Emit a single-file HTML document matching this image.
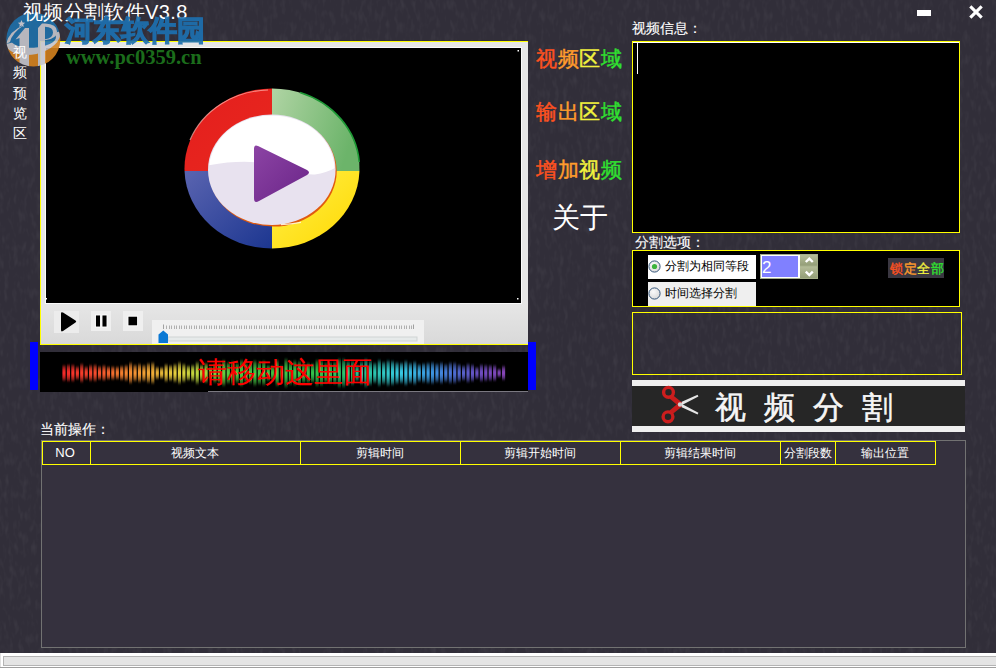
<!DOCTYPE html>
<html><head><meta charset="utf-8">
<style>
*{margin:0;padding:0;box-sizing:border-box}
html,body{width:996px;height:668px;overflow:hidden}
body{background:#312e39;font-family:"Liberation Sans",sans-serif;color:#fff;position:relative}
.a{position:absolute}
.sk{-webkit-text-stroke:0.12px currentColor}
.t{white-space:nowrap;line-height:1}
.yb{border:1px solid #ffff00}
.gr2{-webkit-text-stroke:0.45px currentColor}
.grad{font-weight:500;background:linear-gradient(90deg,#ff4e1c 0%,#ff5c1e 20%,#ff9428 30%,#ffa030 46%,#f5f03c 54%,#f5f53c 72%,#30e028 79%,#28e028 100%);-webkit-background-clip:text;background-clip:text;color:transparent}
.hd{position:absolute;top:0;height:22px;border-right:1px solid #ffff00;font-size:12px;line-height:22px;text-align:center;color:#fff;padding-right:2px}
</style></head><body>

<svg class="a" style="left:0;top:0" width="996" height="668"><filter id="tx" x="0" y="0" width="100%" height="100%"><feTurbulence type="fractalNoise" baseFrequency="0.22 0.09" numOctaves="2" seed="3"/><feColorMatrix type="matrix" values="0 0 0 0 1  0 0 0 0 1  0 0 0 0 1  1.2 0 0 0 -0.55"/></filter><rect width="996" height="668" filter="url(#tx)" opacity="0.09"/></svg>
<!-- title -->
<div class="a" style="left:917px;top:10px;width:14px;height:6px;background:#fff"></div>
<svg class="a" style="left:966px;top:3px" width="20" height="19" viewBox="0 0 20 19"><path d="M4.3 3.3 L15.7 14.7 M15.7 3.3 L4.3 14.7" stroke="#fff" stroke-width="3.1" stroke-linecap="butt"/></svg>


<!-- video panel -->
<div class="a" style="left:40px;top:41px;width:488px;height:304px;background:#e6e6e6;border-left:1px solid #ffff00;border-top:1px solid #ffff00;border-bottom:1px solid #ffff00"></div>
<div class="a" style="left:45px;top:47px;width:477px;height:257px;background:#000;border:1px solid #fafafa"></div>
<div class="a" id="ctrl" style="left:41px;top:304px;width:487px;height:40px;background:linear-gradient(#e6e6e6,#d9d9d9)"></div>
<svg class="a" style="left:0;top:0" width="560" height="350" viewBox="0 0 560 350">
<defs>
<linearGradient id="gg" x1="0" y1="0" x2="1" y2="0.3"><stop offset="0" stop-color="#b0d4a4"/><stop offset="1" stop-color="#6cb46a"/></linearGradient>
<linearGradient id="gy" x1="0" y1="0" x2="1" y2="1"><stop offset="0" stop-color="#fff04a"/><stop offset="1" stop-color="#ffd800"/></linearGradient>
<linearGradient id="gbl" x1="0" y1="0" x2="1" y2="1"><stop offset="0" stop-color="#5a64b0"/><stop offset="1" stop-color="#1c3690"/></linearGradient>
<linearGradient id="grd" x1="0" y1="0" x2="1" y2="1"><stop offset="0" stop-color="#e41e1e"/><stop offset="1" stop-color="#e8281e"/></linearGradient>
<linearGradient id="gw" x1="0" y1="0" x2="0" y2="1"><stop offset="0" stop-color="#ffffff"/><stop offset="1" stop-color="#ffffff"/></linearGradient>
<linearGradient id="gp" x1="0" y1="0" x2="1" y2="1"><stop offset="0" stop-color="#8c44a4"/><stop offset="1" stop-color="#6a2488"/></linearGradient>
</defs>
<!-- controls -->
<rect x="54" y="311" width="25" height="22" fill="#ececec"/>
<path d="M61 313.5 Q61 311.5 63 312.6 L75.5 320.6 Q77 321.6 75.5 322.6 L63 331 Q61 332.2 61 330 Z" fill="#000"/>
<rect x="91" y="311" width="20" height="20" fill="#efefef"/>
<rect x="95.5" y="315" width="5" height="12" fill="#000" stroke="#fff" stroke-width="0.9"/>
<rect x="102" y="315" width="5" height="12" fill="#000" stroke="#fff" stroke-width="0.9"/>
<rect x="123" y="311" width="20" height="20" fill="#efefef"/>
<rect x="128" y="316.2" width="9.6" height="9.6" fill="#000" stroke="#fff" stroke-width="0.9"/>
<rect x="152" y="320" width="272" height="24" fill="#f0f0f0"/>
<rect x="163" y="324.5" width="1" height="4.5" fill="#a0a0a0"/>
<g id="ticks"><rect x="166" y="325.5" width="1" height="3.5" fill="#b0b0b0"/><rect x="169" y="325.5" width="1" height="3.5" fill="#b0b0b0"/><rect x="171" y="325.5" width="1" height="3.5" fill="#b0b0b0"/><rect x="174" y="325.5" width="1" height="3.5" fill="#b0b0b0"/><rect x="176" y="325.5" width="1" height="3.5" fill="#b0b0b0"/><rect x="179" y="325.5" width="1" height="3.5" fill="#b0b0b0"/><rect x="181" y="325.5" width="1" height="3.5" fill="#b0b0b0"/><rect x="184" y="325.5" width="1" height="3.5" fill="#b0b0b0"/><rect x="186" y="325.5" width="1" height="3.5" fill="#b0b0b0"/><rect x="189" y="325.5" width="1" height="3.5" fill="#b0b0b0"/><rect x="191" y="325.5" width="1" height="3.5" fill="#b0b0b0"/><rect x="194" y="325.5" width="1" height="3.5" fill="#b0b0b0"/><rect x="196" y="325.5" width="1" height="3.5" fill="#b0b0b0"/><rect x="199" y="325.5" width="1" height="3.5" fill="#b0b0b0"/><rect x="201" y="325.5" width="1" height="3.5" fill="#b0b0b0"/><rect x="204" y="325.5" width="1" height="3.5" fill="#b0b0b0"/><rect x="206" y="325.5" width="1" height="3.5" fill="#b0b0b0"/><rect x="209" y="325.5" width="1" height="3.5" fill="#b0b0b0"/><rect x="211" y="325.5" width="1" height="3.5" fill="#b0b0b0"/><rect x="214" y="325.5" width="1" height="3.5" fill="#b0b0b0"/><rect x="216" y="325.5" width="1" height="3.5" fill="#b0b0b0"/><rect x="219" y="325.5" width="1" height="3.5" fill="#b0b0b0"/><rect x="221" y="325.5" width="1" height="3.5" fill="#b0b0b0"/><rect x="224" y="325.5" width="1" height="3.5" fill="#b0b0b0"/><rect x="226" y="325.5" width="1" height="3.5" fill="#b0b0b0"/><rect x="229" y="325.5" width="1" height="3.5" fill="#b0b0b0"/><rect x="231" y="325.5" width="1" height="3.5" fill="#b0b0b0"/><rect x="234" y="325.5" width="1" height="3.5" fill="#b0b0b0"/><rect x="236" y="325.5" width="1" height="3.5" fill="#b0b0b0"/><rect x="239" y="325.5" width="1" height="3.5" fill="#b0b0b0"/><rect x="241" y="325.5" width="1" height="3.5" fill="#b0b0b0"/><rect x="244" y="325.5" width="1" height="3.5" fill="#b0b0b0"/><rect x="246" y="325.5" width="1" height="3.5" fill="#b0b0b0"/><rect x="249" y="325.5" width="1" height="3.5" fill="#b0b0b0"/><rect x="251" y="325.5" width="1" height="3.5" fill="#b0b0b0"/><rect x="254" y="325.5" width="1" height="3.5" fill="#b0b0b0"/><rect x="256" y="325.5" width="1" height="3.5" fill="#b0b0b0"/><rect x="259" y="325.5" width="1" height="3.5" fill="#b0b0b0"/><rect x="261" y="325.5" width="1" height="3.5" fill="#b0b0b0"/><rect x="264" y="325.5" width="1" height="3.5" fill="#b0b0b0"/><rect x="266" y="325.5" width="1" height="3.5" fill="#b0b0b0"/><rect x="269" y="325.5" width="1" height="3.5" fill="#b0b0b0"/><rect x="271" y="325.5" width="1" height="3.5" fill="#b0b0b0"/><rect x="274" y="325.5" width="1" height="3.5" fill="#b0b0b0"/><rect x="276" y="325.5" width="1" height="3.5" fill="#b0b0b0"/><rect x="279" y="325.5" width="1" height="3.5" fill="#b0b0b0"/><rect x="281" y="325.5" width="1" height="3.5" fill="#b0b0b0"/><rect x="284" y="325.5" width="1" height="3.5" fill="#b0b0b0"/><rect x="286" y="325.5" width="1" height="3.5" fill="#b0b0b0"/><rect x="289" y="325.5" width="1" height="3.5" fill="#b0b0b0"/><rect x="291" y="325.5" width="1" height="3.5" fill="#b0b0b0"/><rect x="294" y="325.5" width="1" height="3.5" fill="#b0b0b0"/><rect x="296" y="325.5" width="1" height="3.5" fill="#b0b0b0"/><rect x="299" y="325.5" width="1" height="3.5" fill="#b0b0b0"/><rect x="301" y="325.5" width="1" height="3.5" fill="#b0b0b0"/><rect x="304" y="325.5" width="1" height="3.5" fill="#b0b0b0"/><rect x="306" y="325.5" width="1" height="3.5" fill="#b0b0b0"/><rect x="309" y="325.5" width="1" height="3.5" fill="#b0b0b0"/><rect x="311" y="325.5" width="1" height="3.5" fill="#b0b0b0"/><rect x="314" y="325.5" width="1" height="3.5" fill="#b0b0b0"/><rect x="316" y="325.5" width="1" height="3.5" fill="#b0b0b0"/><rect x="319" y="325.5" width="1" height="3.5" fill="#b0b0b0"/><rect x="321" y="325.5" width="1" height="3.5" fill="#b0b0b0"/><rect x="324" y="325.5" width="1" height="3.5" fill="#b0b0b0"/><rect x="326" y="325.5" width="1" height="3.5" fill="#b0b0b0"/><rect x="329" y="325.5" width="1" height="3.5" fill="#b0b0b0"/><rect x="331" y="325.5" width="1" height="3.5" fill="#b0b0b0"/><rect x="334" y="325.5" width="1" height="3.5" fill="#b0b0b0"/><rect x="336" y="325.5" width="1" height="3.5" fill="#b0b0b0"/><rect x="339" y="325.5" width="1" height="3.5" fill="#b0b0b0"/><rect x="341" y="325.5" width="1" height="3.5" fill="#b0b0b0"/><rect x="344" y="325.5" width="1" height="3.5" fill="#b0b0b0"/><rect x="346" y="325.5" width="1" height="3.5" fill="#b0b0b0"/><rect x="349" y="325.5" width="1" height="3.5" fill="#b0b0b0"/><rect x="351" y="325.5" width="1" height="3.5" fill="#b0b0b0"/><rect x="354" y="325.5" width="1" height="3.5" fill="#b0b0b0"/><rect x="356" y="325.5" width="1" height="3.5" fill="#b0b0b0"/><rect x="359" y="325.5" width="1" height="3.5" fill="#b0b0b0"/><rect x="361" y="325.5" width="1" height="3.5" fill="#b0b0b0"/><rect x="364" y="325.5" width="1" height="3.5" fill="#b0b0b0"/><rect x="366" y="325.5" width="1" height="3.5" fill="#b0b0b0"/><rect x="369" y="325.5" width="1" height="3.5" fill="#b0b0b0"/><rect x="371" y="325.5" width="1" height="3.5" fill="#b0b0b0"/><rect x="374" y="325.5" width="1" height="3.5" fill="#b0b0b0"/><rect x="376" y="325.5" width="1" height="3.5" fill="#b0b0b0"/><rect x="379" y="325.5" width="1" height="3.5" fill="#b0b0b0"/><rect x="381" y="325.5" width="1" height="3.5" fill="#b0b0b0"/><rect x="384" y="325.5" width="1" height="3.5" fill="#b0b0b0"/><rect x="386" y="325.5" width="1" height="3.5" fill="#b0b0b0"/><rect x="389" y="325.5" width="1" height="3.5" fill="#b0b0b0"/><rect x="391" y="325.5" width="1" height="3.5" fill="#b0b0b0"/><rect x="394" y="325.5" width="1" height="3.5" fill="#b0b0b0"/><rect x="396" y="325.5" width="1" height="3.5" fill="#b0b0b0"/><rect x="399" y="325.5" width="1" height="3.5" fill="#b0b0b0"/><rect x="401" y="325.5" width="1" height="3.5" fill="#b0b0b0"/><rect x="404" y="325.5" width="1" height="3.5" fill="#b0b0b0"/><rect x="406" y="325.5" width="1" height="3.5" fill="#b0b0b0"/><rect x="409" y="325.5" width="1" height="3.5" fill="#b0b0b0"/><rect x="411" y="325.5" width="1" height="3.5" fill="#b0b0b0"/><rect x="413" y="324.5" width="1" height="4.5" fill="#a0a0a0"/></g>
<rect x="168" y="337" width="249" height="4" fill="#e6eaea" stroke="#cfd3d3" stroke-width="1"/>
<path d="M158.5 343 L158.5 334.5 L163.3 330.5 L168 334.5 L168 343 Z" fill="#0a78d4"/>
<rect x="45.5" y="298" width="1.5" height="1.5" fill="#fff"/>
<rect x="517.5" y="50" width="1.5" height="1.5" fill="#fff"/>
<rect x="517" y="298" width="1.5" height="1.5" fill="#fff"/>
<!-- rim (3D thickness) -->
<path d="M272 171 L184.54 171 A87.5 80 0 0 1 272 88.5 Z" fill="url(#grd)"/>
<path d="M272 171 L272 88.5 A87.5 80 0 0 1 359.46 171 Z" fill="url(#gg)"/>
<path d="M272 171 L359.46 171 A87.5 80 0 0 1 272 248.5 Z" fill="url(#gy)"/>
<path d="M272 171 L272 248.5 A87.5 80 0 0 1 184.54 171 Z" fill="url(#gbl)"/>
<path d="M300 92.5 A87.5 80 0 0 1 359.2 162" stroke="#1e9a36" stroke-width="1.6" fill="none"/>
<path d="M190 140 A86 78.5 0 0 1 268 90" stroke="#ffb8b0" stroke-width="1.2" fill="none" opacity="0.7"/>
<ellipse cx="272.9" cy="171.3" rx="63.8" ry="55.3" fill="#e05a10"/>
<ellipse cx="271.8" cy="169.75" rx="63.8" ry="55.25" fill="#e8e2ef"/>
<clipPath id="ic"><ellipse cx="271.8" cy="169.75" rx="62.8" ry="54.3"/></clipPath>
<ellipse cx="271.8" cy="169.75" rx="62.8" ry="54.3" fill="#e8e2ef"/>
<path clip-path="url(#ic)" d="M200 100 L345 100 L345 160 Q334 172 315 174.5 Q298 175 280 167 Q250 157 205 166 Z" fill="#ffffff"/>
<path d="M281 224.6 Q291 224.2 301 222.4" stroke="#fff8e0" stroke-width="1.3" fill="none" opacity="0.9"/>
<path d="M258 146 Q254 144 254 149 L254 198 Q254 204 259 201 L307 175 Q311 172.5 307 170 Z" fill="url(#gp)"/>
</svg>

<!-- visualizer -->
<svg class="a" style="left:0;top:0" width="996" height="668" viewBox="0 0 996 668">
<defs>
<linearGradient id="vf" x1="0" y1="0" x2="0" y2="1"><stop offset="0" stop-color="#000"/><stop offset="0.15" stop-color="#888"/><stop offset="0.35" stop-color="#e0e0e0"/><stop offset="0.5" stop-color="#fff"/><stop offset="0.65" stop-color="#e0e0e0"/><stop offset="0.85" stop-color="#888"/><stop offset="1" stop-color="#000"/></linearGradient>
<linearGradient id="rb" x1="62" y1="0" x2="506" y2="0" gradientUnits="userSpaceOnUse"><stop offset="0" stop-color="#ff2a2a"/><stop offset="0.07" stop-color="#ff4a2e"/><stop offset="0.13" stop-color="#ff8030"/><stop offset="0.2" stop-color="#f8b038"/><stop offset="0.26" stop-color="#ecd840"/><stop offset="0.315" stop-color="#b8e040"/><stop offset="0.38" stop-color="#50d040"/><stop offset="0.6" stop-color="#30c850"/><stop offset="0.68" stop-color="#28c8a0"/><stop offset="0.76" stop-color="#38d0e8"/><stop offset="0.83" stop-color="#3c9ce8"/><stop offset="0.885" stop-color="#5070d8"/><stop offset="0.94" stop-color="#7050c8"/><stop offset="1" stop-color="#9048c0"/></linearGradient>
<mask id="bm" maskUnits="userSpaceOnUse" x="0" y="340" width="996" height="60"><rect x="62.40" y="364.3" width="3.2" height="17.5" fill="url(#vf)"/>
<rect x="66.84" y="363.6" width="3.2" height="18.8" fill="url(#vf)"/>
<rect x="71.28" y="363.7" width="3.2" height="18.7" fill="url(#vf)"/>
<rect x="75.72" y="365.8" width="3.2" height="14.4" fill="url(#vf)"/>
<rect x="80.16" y="362.8" width="3.2" height="20.4" fill="url(#vf)"/>
<rect x="84.60" y="365.9" width="3.2" height="14.3" fill="url(#vf)"/>
<rect x="89.04" y="364.1" width="3.2" height="17.8" fill="url(#vf)"/>
<rect x="93.48" y="363.7" width="3.2" height="18.5" fill="url(#vf)"/>
<rect x="97.92" y="365.4" width="3.2" height="15.2" fill="url(#vf)"/>
<rect x="102.36" y="364.4" width="3.2" height="17.1" fill="url(#vf)"/>
<rect x="106.80" y="365.8" width="3.2" height="14.4" fill="url(#vf)"/>
<rect x="111.24" y="365.7" width="3.2" height="14.7" fill="url(#vf)"/>
<rect x="115.68" y="366.0" width="3.2" height="13.9" fill="url(#vf)"/>
<rect x="120.12" y="365.1" width="3.2" height="15.8" fill="url(#vf)"/>
<rect x="124.56" y="364.3" width="3.2" height="17.4" fill="url(#vf)"/>
<rect x="129.00" y="361.5" width="3.2" height="23.0" fill="url(#vf)"/>
<rect x="133.44" y="363.9" width="3.2" height="18.2" fill="url(#vf)"/>
<rect x="137.88" y="362.9" width="3.2" height="20.2" fill="url(#vf)"/>
<rect x="142.32" y="364.1" width="3.2" height="17.9" fill="url(#vf)"/>
<rect x="146.76" y="362.2" width="3.2" height="21.6" fill="url(#vf)"/>
<rect x="151.20" y="361.4" width="3.2" height="23.3" fill="url(#vf)"/>
<rect x="155.64" y="366.2" width="3.2" height="13.6" fill="url(#vf)"/>
<rect x="160.08" y="366.7" width="3.2" height="12.6" fill="url(#vf)"/>
<rect x="164.52" y="363.3" width="3.2" height="19.3" fill="url(#vf)"/>
<rect x="168.96" y="364.4" width="3.2" height="17.2" fill="url(#vf)"/>
<rect x="173.40" y="363.1" width="3.2" height="19.9" fill="url(#vf)"/>
<rect x="177.84" y="361.1" width="3.2" height="23.7" fill="url(#vf)"/>
<rect x="182.28" y="363.0" width="3.2" height="20.0" fill="url(#vf)"/>
<rect x="186.72" y="364.9" width="3.2" height="16.2" fill="url(#vf)"/>
<rect x="191.16" y="364.1" width="3.2" height="17.9" fill="url(#vf)"/>
<rect x="195.60" y="361.1" width="3.2" height="23.9" fill="url(#vf)"/>
<rect x="200.04" y="363.9" width="3.2" height="18.3" fill="url(#vf)"/>
<rect x="204.48" y="362.3" width="3.2" height="21.4" fill="url(#vf)"/>
<rect x="208.92" y="366.4" width="3.2" height="13.2" fill="url(#vf)"/>
<rect x="213.36" y="362.7" width="3.2" height="20.6" fill="url(#vf)"/>
<rect x="217.80" y="362.5" width="3.2" height="21.1" fill="url(#vf)"/>
<rect x="222.24" y="359.1" width="3.2" height="27.9" fill="url(#vf)"/>
<rect x="226.68" y="361.4" width="3.2" height="23.1" fill="url(#vf)"/>
<rect x="231.12" y="360.4" width="3.2" height="25.1" fill="url(#vf)"/>
<rect x="235.56" y="362.2" width="3.2" height="21.7" fill="url(#vf)"/>
<rect x="240.00" y="358.8" width="3.2" height="28.4" fill="url(#vf)"/>
<rect x="244.44" y="362.2" width="3.2" height="21.7" fill="url(#vf)"/>
<rect x="248.88" y="361.8" width="3.2" height="22.5" fill="url(#vf)"/>
<rect x="253.32" y="359.3" width="3.2" height="27.5" fill="url(#vf)"/>
<rect x="257.76" y="360.6" width="3.2" height="24.9" fill="url(#vf)"/>
<rect x="262.20" y="359.6" width="3.2" height="26.8" fill="url(#vf)"/>
<rect x="266.64" y="364.4" width="3.2" height="17.2" fill="url(#vf)"/>
<rect x="271.08" y="365.2" width="3.2" height="15.6" fill="url(#vf)"/>
<rect x="275.52" y="358.9" width="3.2" height="28.2" fill="url(#vf)"/>
<rect x="279.96" y="364.9" width="3.2" height="16.2" fill="url(#vf)"/>
<rect x="284.40" y="357.5" width="3.2" height="31.1" fill="url(#vf)"/>
<rect x="288.84" y="360.3" width="3.2" height="25.5" fill="url(#vf)"/>
<rect x="293.28" y="359.3" width="3.2" height="27.3" fill="url(#vf)"/>
<rect x="297.72" y="360.0" width="3.2" height="26.0" fill="url(#vf)"/>
<rect x="302.16" y="361.9" width="3.2" height="22.1" fill="url(#vf)"/>
<rect x="306.60" y="362.0" width="3.2" height="21.9" fill="url(#vf)"/>
<rect x="311.04" y="362.6" width="3.2" height="20.8" fill="url(#vf)"/>
<rect x="315.48" y="358.7" width="3.2" height="28.6" fill="url(#vf)"/>
<rect x="319.92" y="359.2" width="3.2" height="27.7" fill="url(#vf)"/>
<rect x="324.36" y="361.7" width="3.2" height="22.6" fill="url(#vf)"/>
<rect x="328.80" y="361.5" width="3.2" height="23.0" fill="url(#vf)"/>
<rect x="333.24" y="360.8" width="3.2" height="24.4" fill="url(#vf)"/>
<rect x="337.68" y="357.4" width="3.2" height="31.2" fill="url(#vf)"/>
<rect x="342.12" y="357.5" width="3.2" height="31.0" fill="url(#vf)"/>
<rect x="346.56" y="359.9" width="3.2" height="26.3" fill="url(#vf)"/>
<rect x="351.00" y="359.9" width="3.2" height="26.2" fill="url(#vf)"/>
<rect x="355.44" y="364.1" width="3.2" height="17.8" fill="url(#vf)"/>
<rect x="359.88" y="360.4" width="3.2" height="25.2" fill="url(#vf)"/>
<rect x="364.32" y="357.6" width="3.2" height="30.8" fill="url(#vf)"/>
<rect x="368.76" y="359.8" width="3.2" height="26.4" fill="url(#vf)"/>
<rect x="373.20" y="361.9" width="3.2" height="22.2" fill="url(#vf)"/>
<rect x="377.64" y="358.7" width="3.2" height="28.5" fill="url(#vf)"/>
<rect x="382.08" y="360.8" width="3.2" height="24.3" fill="url(#vf)"/>
<rect x="386.52" y="359.1" width="3.2" height="27.9" fill="url(#vf)"/>
<rect x="390.96" y="359.7" width="3.2" height="26.6" fill="url(#vf)"/>
<rect x="395.40" y="361.2" width="3.2" height="23.6" fill="url(#vf)"/>
<rect x="399.84" y="361.7" width="3.2" height="22.6" fill="url(#vf)"/>
<rect x="404.28" y="359.7" width="3.2" height="26.7" fill="url(#vf)"/>
<rect x="408.72" y="361.9" width="3.2" height="22.2" fill="url(#vf)"/>
<rect x="413.16" y="360.5" width="3.2" height="25.1" fill="url(#vf)"/>
<rect x="417.60" y="363.3" width="3.2" height="19.3" fill="url(#vf)"/>
<rect x="422.04" y="362.4" width="3.2" height="21.1" fill="url(#vf)"/>
<rect x="426.48" y="361.7" width="3.2" height="22.7" fill="url(#vf)"/>
<rect x="430.92" y="361.1" width="3.2" height="23.8" fill="url(#vf)"/>
<rect x="435.36" y="362.6" width="3.2" height="20.7" fill="url(#vf)"/>
<rect x="439.80" y="361.4" width="3.2" height="23.2" fill="url(#vf)"/>
<rect x="444.24" y="363.2" width="3.2" height="19.7" fill="url(#vf)"/>
<rect x="448.68" y="361.5" width="3.2" height="22.9" fill="url(#vf)"/>
<rect x="453.12" y="361.5" width="3.2" height="23.0" fill="url(#vf)"/>
<rect x="457.56" y="363.4" width="3.2" height="19.2" fill="url(#vf)"/>
<rect x="462.00" y="364.9" width="3.2" height="16.2" fill="url(#vf)"/>
<rect x="466.44" y="362.7" width="3.2" height="20.7" fill="url(#vf)"/>
<rect x="470.88" y="363.7" width="3.2" height="18.7" fill="url(#vf)"/>
<rect x="475.32" y="366.5" width="3.2" height="13.1" fill="url(#vf)"/>
<rect x="479.76" y="363.6" width="3.2" height="18.8" fill="url(#vf)"/>
<rect x="484.20" y="364.1" width="3.2" height="17.8" fill="url(#vf)"/>
<rect x="488.64" y="364.3" width="3.2" height="17.4" fill="url(#vf)"/>
<rect x="493.08" y="364.4" width="3.2" height="17.2" fill="url(#vf)"/>
<rect x="497.52" y="368.3" width="3.2" height="9.4" fill="url(#vf)"/>
<rect x="501.96" y="365.2" width="3.2" height="15.6" fill="url(#vf)"/></mask>
<filter id="hb" x="-5%" y="-20%" width="110%" height="140%"><feGaussianBlur stdDeviation="0.5 0.8"/></filter>
</defs>
<rect x="40" y="352" width="488" height="40" fill="#000"/>
<rect x="208" y="391" width="320" height="1" fill="#7a7880"/>
<rect x="30" y="342" width="8" height="48" fill="#0000ff"/>
<rect x="528" y="342" width="8" height="48" fill="#0000ff"/>
<g filter="url(#hb)"><rect x="50" y="345" width="470" height="50" fill="url(#rb)" mask="url(#bm)"/></g>
</svg>
<div class="a t" id="vt" style="left:198px;top:358px;font-size:29px;color:#ff0000;">请移动这里面</div>

<!-- right menu -->
<div class="a t gr2" id="m1" style="left:536px;top:48px;font-size:21px;letter-spacing:0.6px;"><span style="color:#ff5220">视</span><span style="color:#ff9c2c">频</span><span style="color:#f2f23e">区</span><span style="color:#30e030">域</span></div>
<div class="a t gr2" id="m2" style="left:536px;top:101px;font-size:21px;letter-spacing:0.6px;"><span style="color:#ff5220">输</span><span style="color:#ff9c2c">出</span><span style="color:#f2f23e">区</span><span style="color:#30e030">域</span></div>
<div class="a t gr2" id="m3" style="left:536px;top:159px;font-size:21px;letter-spacing:0.6px;"><span style="color:#ff5220">增</span><span style="color:#ff9c2c">加</span><span style="color:#f2f23e">视</span><span style="color:#30e030">频</span></div>
<div class="a t" id="m4" style="left:552px;top:204px;font-size:28px;">关于</div>

<!-- right info -->
<div class="a t sk" id="l1" style="left:632px;top:21px;font-size:14px;font-weight:500">视频信息：</div>
<div class="a yb" style="left:632px;top:41px;width:328px;height:192px;background:#000"></div>
<div class="a" style="left:633px;top:42px;width:326px;height:1px;background:#fff"></div>
<div class="a" style="left:637px;top:43px;width:1px;height:31px;background:#fff"></div>

<div class="a t sk" id="l2" style="left:635px;top:235px;font-size:14px;font-weight:500">分割选项：</div>
<div class="a yb" style="left:632px;top:250px;width:328px;height:57px;background:#000"></div>

<div class="a" style="left:648px;top:255px;width:108px;height:24px;background:#fff"></div>
<div class="a" style="left:648px;top:282px;width:108px;height:24px;background:#efefef"></div>
<svg class="a" style="left:640px;top:250px" width="200" height="60" viewBox="640 250 200 60">
<defs><radialGradient id="rg" cx="0.4" cy="0.35" r="0.7"><stop offset="0" stop-color="#fafafa"/><stop offset="1" stop-color="#d8d8d8"/></radialGradient>
<linearGradient id="sp" x1="0" y1="0" x2="0" y2="1"><stop offset="0" stop-color="#b4bc98"/><stop offset="1" stop-color="#949e78"/></linearGradient></defs>
<circle cx="654.5" cy="266.5" r="5.6" fill="url(#rg)" stroke="#33557a" stroke-width="1"/>
<circle cx="654.5" cy="266.5" r="2.6" fill="#3cb43c"/>
<circle cx="654.5" cy="293.5" r="5.6" fill="url(#rg)" stroke="#33557a" stroke-width="1"/>
<rect x="760" y="254" width="58" height="25" fill="#a4ae88"/>
<rect x="761" y="255" width="39" height="23" fill="#fff"/>
<rect x="762" y="256" width="36" height="21" fill="#8080ff"/>
<rect x="800" y="255" width="17" height="10.5" fill="url(#sp)"/>
<rect x="800" y="266.5" width="17" height="11.5" fill="url(#sp)"/>
<path d="M805.8 262 L809.3 258.6 L812.8 262" stroke="#fff" stroke-width="2.4" fill="none"/>
<path d="M805.8 271.6 L809.3 275 L812.8 271.6" stroke="#fff" stroke-width="2.4" fill="none"/>
</svg>
<div class="a t" id="r1" style="left:665px;top:260px;font-size:12px;color:#000">分割为相同等段</div>
<div class="a t" id="r2" style="left:665px;top:287px;font-size:12px;color:#000">时间选择分割</div>
<div class="a t" id="num" style="left:762px;top:259px;font-size:17px;color:#fff">2</div>
<div class="a" style="left:888px;top:258px;width:56px;height:20px;background:#3a3741"></div>
<div class="a t gr2" id="lk" style="left:890px;top:262px;font-size:13px;letter-spacing:0.5px;-webkit-text-stroke:0.35px currentColor"><span style="color:#ff5220">锁</span><span style="color:#ff9c2c">定</span><span style="color:#f2f23e">全</span><span style="color:#30e030">部</span></div>

<div class="a yb" style="left:632px;top:312px;width:330px;height:63px;"></div>


<!-- big button -->
<div class="a" style="left:632px;top:380px;width:333px;height:52px;background:#262626;border-top:6px solid #efefef;border-bottom:6px solid #efefef"></div>
<div class="a t" id="bt" style="left:715px;top:392px;font-size:31px;letter-spacing:18px;-webkit-text-stroke:0.5px #fff;color:#f4f4f4">视频分割</div>

<svg class="a" style="left:655px;top:385px" width="50" height="42" viewBox="655 385 50 42">
<path d="M679 403 L697.6 394.8 L698.4 396.6 L681 405.6 Z" fill="#e6e6e6"/>
<path d="M679 406 L697.6 414.6 L698.4 412.8 L681 403.4 Z" fill="#e6e6e6"/>
<path d="M672 394.5 L682 402.5 L679 406.5 L669.5 398.5 Z" fill="#c81c1c"/>
<path d="M672 414.5 L682 406.5 L679 402.5 L669.5 410.5 Z" fill="#c81c1c"/>
<circle cx="668.5" cy="392.3" r="4.9" fill="none" stroke="#cc1e1e" stroke-width="3.4"/>
<circle cx="668" cy="416.8" r="4.9" fill="none" stroke="#cc1e1e" stroke-width="3.4"/>
<circle cx="680" cy="404.5" r="2.2" fill="#d0d0d0"/>
</svg>
<!-- current op -->
<div class="a t sk" id="l3" style="left:40px;top:422px;font-size:14px;font-weight:500">当前操作：</div>
<div class="a" style="left:41px;top:440px;width:925px;height:208px;border:1px solid #727272;background:#35313e"></div>
<div class="a" id="hdr" style="left:42px;top:441px;width:894px;height:24px;border-top:1px solid #ffff00;border-bottom:1px solid #ffff00;border-left:1px solid #ffff00">
  <div class="hd" style="left:0;width:48px;font-size:13px;padding-right:3px">NO</div>
  <div class="hd" style="left:48px;width:210px">视频文本</div>
  <div class="hd" style="left:258px;width:160px">剪辑时间</div>
  <div class="hd" style="left:418px;width:160px">剪辑开始时间</div>
  <div class="hd" style="left:578px;width:160px">剪辑结果时间</div>
  <div class="hd" style="left:738px;width:55px;padding-right:0">分割段数</div>
  <div class="hd" style="left:793px;width:100px">输出位置</div>
</div>

<!-- watermark -->
<svg class="a" style="left:0;top:0" width="70" height="80" viewBox="0 0 70 80">
<defs><clipPath id="lc"><circle cx="33.3" cy="39.6" r="27"/></clipPath></defs>
<g clip-path="url(#lc)" opacity="0.9">
<rect x="0" y="0" width="70" height="80" fill="#d4821e"/>
<ellipse cx="32.8" cy="37.75" rx="27.9" ry="16.6" transform="rotate(-12.9 32.8 37.75)" fill="#c6c6cc"/>
<path d="M0 0 H70 V29.2 L0 45.3 Z" fill="#1e70aa"/>
<ellipse cx="33.25" cy="38.3" rx="22.75" ry="9.4" transform="rotate(-3.3 33.25 38.3)" fill="#1e70aa"/>
<path d="M6 44 Q9 31 24 25 Q12 33 10 42 Z" fill="#c6c6cc"/>
<path d="M15.5 39.6 L25 28 L29 28 L29 80 L19.5 80 L19.5 38 Z" fill="#c6c6cc"/>
<path d="M38 28 L42 23.5 L45 23.5 Q57 24 57 31.5 Q56.5 39 46 40 L45 40 L45 80 L38 80 Z M45 26.8 L45 39.3 Q52.8 38.5 53 32.5 Q53 27 45 26.8 Z" fill="#c6c6cc" fill-rule="evenodd"/>
<path d="M21.5 20 l1.1 2.4 2.5 0.3 -1.9 1.7 0.5 2.5 -2.2 -1.3 -2.2 1.3 0.5 -2.5 -1.9 -1.7 2.5 -0.3 z" fill="#d0d0d8"/>
</g>
</svg>
<div class="a t" id="title" style="left:23px;top:2px;font-size:20px;letter-spacing:0.35px">视频分割软件V3.8</div>
<div class="a t" id="wm1" style="left:65px;top:17px;font-size:27.5px;font-weight:bold;color:#1d70b0;font-family:'Liberation Serif',serif;-webkit-text-stroke:1.3px #1d70b0;opacity:0.92">河东软件园</div>
<div class="a t" id="wm2" style="left:66px;top:47px;font-size:20.5px;font-weight:bold;color:#1b6c1b;font-family:'Liberation Serif',serif">www.pc0359.cn</div>

<!-- vertical label -->
<div class="a" id="vlab" style="left:13px;top:42px;width:16px;font-size:14px;line-height:20.3px;">视<br>频<br>预<br>览<br>区</div>

<!-- status bar -->
<div class="a" style="left:0;top:653px;width:996px;height:15px;background:#fff;border-left:1px solid #e0e0e0"></div>
<div class="a" style="left:3px;top:656px;width:1000px;height:10px;background:#e4e4e4;border:1px solid #b4b4b4"></div>
<div class="a" style="left:0;top:667px;width:996px;height:1px;background:#a0a0a0"></div>

</body></html>
